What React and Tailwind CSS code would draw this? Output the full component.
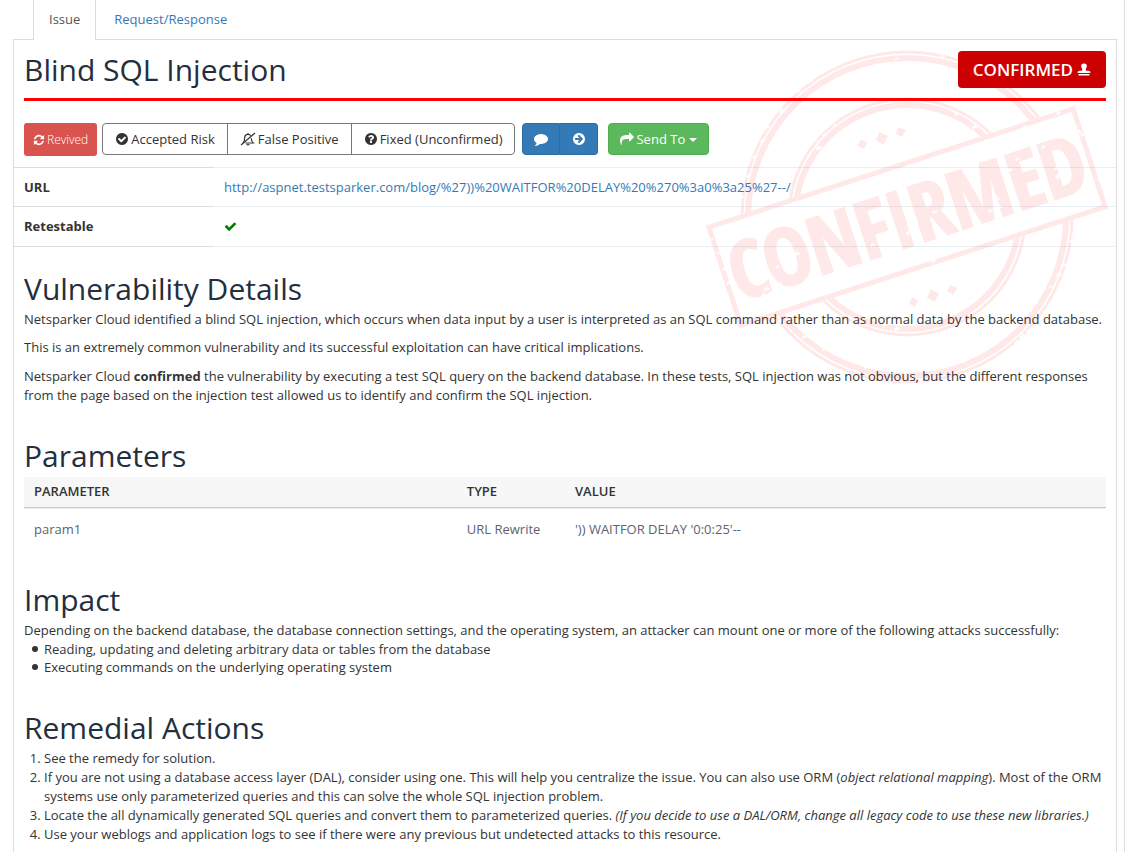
const ICONS = {
  refresh:
    'M1639 1056q0 5-1 7-64 268-268 434.5t-478 166.5q-146 0-282.5-55t-243.5-157l-129 129q-19 19-45 19t-45-19-19-45v-448q0-26 19-45t45-19h448q26 0 45 19t19 45-19 45l-137 137q71 66 161 102t187 36q134 0 250-65t186-179q11-17 53-117 8-23 30-23h192q13 0 22.5 9.5t9.5 22.5zm25-800v448q0 26-19 45t-45 19h-448q-26 0-45-19t-19-45 19-45l138-138q-148-137-349-137-134 0-250 65t-186 179q-11 17-53 117-8 23-30 23h-199q-13 0-22.5-9.5t-9.5-22.5v-7q65-268 270-434.5t480-166.5q146 0 284 55.5t245 156.5l130-129q19-19 45-19t45 19 19 45z',
  checkCircle:
    'M1412 734q0-28-18-46l-91-90q-19-19-45-19t-45 19l-408 407-226-226q-19-19-45-19t-45 19l-91 90q-18 18-18 46 0 27 18 45l362 362q19 19 45 19 27 0 46-19l543-543q18-18 18-45zm252 162q0 209-103 385.5t-279.5 279.5-385.5 103-385.5-103-279.5-279.5-103-385.5 103-385.5 279.5-279.5 385.5-103 385.5 103 279.5 279.5 103 385.5z',
  questionCircle:
    'M1024 1376v-192q0-14-9-23t-23-9h-192q-14 0-23 9t-9 23v192q0 14 9 23t23 9h192q14 0 23-9t9-23zm256-672q0-88-55.5-163t-138.5-116-170-41q-243 0-371 213-15 24 8 42l132 100q7 6 19 6 16 0 25-12 53-68 86-92 34-24 86-24 48 0 85.5 26t37.5 59q0 38-20 61t-68 45q-63 28-115.5 86.5t-52.5 125.5v36q0 14 9 23t23 9h192q14 0 23-9t9-23q0-19 21.5-49.5t54.5-49.5q32-18 49-28.5t46-35 44.5-48 28-60.5 12.5-81zm384 192q0 209-103 385.5t-279.5 279.5-385.5 103-385.5-103-279.5-279.5-103-385.5 103-385.5 279.5-279.5 385.5-103 385.5 103 279.5 279.5 103 385.5z',
  comment:
    'M1792 896q0 174-120 321.5t-326 233-450 85.5q-70 0-145-8-198 175-460 242-49 14-114 22-17 2-30.5-9t-17.5-29v-1q-3-4-.5-12t2-10 4.5-9.5l6-9 7-8.5 8-9q7-8 31-34.5t34.5-38 31-39.5 32.5-51 27-59 26-76q-157-89-247.5-220t-90.5-281q0-130 71-248.5t191-204.5 286-136.5 348-50.5q244 0 450 85.5t326 233 120 321.5z',
  arrowCircle:
    'M1413 896q0-27-18-45l-91-91-362-362q-18-18-45-18t-45 18l-91 91q-18 18-18 45t18 45l189 189h-502q-26 0-45 19t-19 45v128q0 26 19 45t45 19h502l-189 189q-18 18-18 45t18 45l91 91q18 18 45 18t45-18l362-362 91-91q18-18 18-45zm251 0q0 209-103 385.5t-279.5 279.5-385.5 103-385.5-103-279.5-279.5-103-385.5 103-385.5 279.5-279.5 385.5-103 385.5 103 279.5 279.5 103 385.5z',
  share:
    'M1792 640q0 26-19 45l-512 512q-19 19-45 19t-45-19-19-45v-256h-224q-98 0-175.5 6t-154 21.5-133 42.5-105.5 69.5-80 101-48.5 138.5-17.5 181q0 55 5 123 0 6 2.5 23.5t2.5 26.5q0 15-8.5 25t-23.5 10q-16 0-28-17-7-9-13-22t-13.5-30-10.5-24q-127-285-127-451 0-199 53-333 162-403 875-403h224v-256q0-26 19-45t45-19 45 19l512 512q19 19 19 45z',
  check:
    'M1671 566q0 40-28 68l-724 724-136 136q-28 28-68 28t-68-28l-136-136-362-362q-28-28-28-68t28-68l136-136q28-28 68-28t68 28l294 295 656-657q28-28 68-28t68 28l136 136q28 28 28 68z',
};

function Icon({ name, className = 'size-[14px]' }) {
  return (
    <svg viewBox="0 0 1792 1792" fill="currentColor" aria-hidden="true" className={'shrink-0 ' + className}>
      <path d={ICONS[name]} />
    </svg>
  );
}

function BellSlashIcon() {
  return (
    <svg viewBox="0 0 16 14" fill="none" stroke="currentColor" strokeWidth="1.2" aria-hidden="true" className="h-[14px] w-4 shrink-0">
      <path d="M3 11C4.200 9.800 4.700 8.200 4.700 5.800C4.700 3.800 6 2.300 8 2.300C9.300 2.300 10.300 2.900 10.800 3.800M11.300 6.200C11.400 8.500 12 10 13.200 11H5.500M8 2.300V1" />
      <path d="M6.700 12.200Q8 13.600 9.300 12.200M1 13L15 1" />
    </svg>
  );
}

function StampIcon() {
  return (
    <svg viewBox="0 0 14 14" fill="currentColor" aria-hidden="true" className="size-[14px] shrink-0">
      <path d="M7 .5a2.900 2.900 0 0 1 2.800 3.300C9.500 5 8.700 5.600 8.700 6.800c0 .8.400 1 1.200 1H11.500Q13.500 7.800 13.500 10H.5Q.5 7.800 2.500 7.800H4.100c.8 0 1.200-.2 1.200-1C5.300 5.600 4.500 5 4.200 3.800A2.900 2.900 0 0 1 7 .5zM1.500 11h11v1.500h-11z" />
    </svg>
  );
}

/* Worn spots that are knocked out of the rubber-stamp ink: [x, y, size]. */
const WEAR = [
  [172, 50, 5], [180, 46, 4], [184, 52, 3], [155, 54, 3], [152, 3, 3], [190, 10, 2], [236, 8, 3], [262, 16, 3],
  [103, 32, 4], [107, 28, 3], [92, 42, 3], [75, 62, 4], [60, 78, 4], [56, 92, 3], [48, 108, 3], [42, 127, 3],
  [37, 148, 2], [118, 86, 3], [108, 92, 3], [112, 99, 4], [128, 76, 2], [250, 65, 3], [268, 78, 4],
  [330, 50, 5], [336, 56, 4], [342, 60, 5], [346, 52, 4], [352, 64, 3], [295, 88, 4], [318, 78, 3], [280, 92, 3],
  [204, 176, 6], [207, 170, 4], [202, 184, 4], [228, 163, 3], [221, 156, 3], [150, 150, 3], [166, 196, 3], [120, 172, 2],
  [289, 150, 5], [292, 158, 4], [284, 162, 3], [303, 121, 4], [311, 110, 3], [352, 127, 5], [350, 119, 3], [366, 79, 5],
  [372, 83, 4], [376, 86, 3], [337, 98, 3], [377, 137, 2], [90, 205, 4], [71, 218, 3], [60, 240, 4], [57, 246, 3],
  [74, 234, 2], [62, 164, 3], [50, 190, 2], [110, 228, 3], [230, 205, 5], [237, 202, 4], [244, 200, 5], [227, 212, 3],
  [190, 218, 3], [170, 226, 3], [340, 165, 4], [336, 170, 3], [310, 176, 2], [393, 130, 3], [384, 100, 2], [18, 220, 3],
  [22, 234, 3], [6, 190, 2], [12, 204, 2], [82, 270, 4], [92, 266, 4], [74, 272, 3], [66, 276, 4], [258, 218, 3],
  [242, 226, 4], [247, 232, 3], [210, 276, 3], [190, 280, 4], [178, 276, 3], [230, 280, 3], [155, 272, 3], [287, 262, 4],
  [281, 270, 3], [368, 184, 4], [365, 192, 3], [357, 216, 4], [352, 226, 4], [344, 238, 2], [316, 288, 5], [310, 294, 4],
  [322, 282, 3], [262, 326, 3], [215, 332, 3], [160, 318, 3], [118, 300, 3], [98, 288, 3], [138, 309, 3], [240, 318, 2],
];

function ConfirmedStamp() {
  return (
    <svg
      viewBox="0 0 402 336"
      aria-hidden="true"
      className="pointer-events-none absolute top-[9px] right-[8px] h-[336px] w-[402px] text-[#ff0000] opacity-[0.085]"
    >
      <defs>
        <mask id="wear" maskUnits="userSpaceOnUse" x="0" y="0" width="402" height="336">
          <rect width="402" height="336" fill="#fff" />
          {WEAR.map(([x, y, s], i) => (
            <path
              key={i}
              fill="#000"
              d={`M${x - s * 0.6} ${y}l${s * 0.5} ${-s * 0.3} ${s * 0.3} ${-s * 0.6} ${s * 0.3} ${s * 0.7} ${s * 0.6} ${-s * 0.2} ${-s * 0.4} ${s * 0.7} ${-s * 0.5} ${-s * 0.1} ${-s * 0.3} ${s * 0.6}z`}
            />
          ))}
        </mask>
        <mask id="band" maskUnits="userSpaceOnUse" x="0" y="0" width="402" height="336">
          <rect width="402" height="336" fill="#fff" />
          <rect x="7" y="114" width="388" height="108" fill="#000" transform="rotate(-18 201 168)" />
        </mask>
      </defs>
      <g mask="url(#wear)">
        <g mask="url(#band)" fill="none" stroke="currentColor">
          <circle cx="201" cy="168" r="165" strokeWidth="3" />
          <circle cx="201" cy="168" r="159" strokeWidth="6" />
          <circle cx="201" cy="168" r="118" strokeWidth="3" />
          <circle cx="201" cy="168" r="112" strokeWidth="6" />
        </g>
        <g transform="rotate(-18 201 168)" fill="currentColor">
          <rect x="9.500" y="116.500" width="383" height="103" fill="none" stroke="currentColor" strokeWidth="5" />
          <path d="M201 79l7 6-7 7-6-7zM181 80l5 5-5 5-5-5zM221 80l6 5-6 5-5-5z" />
          <path d="M201 244l7 7-7 6-6-6zM181 246l5 5-5 5-5-5zM221 246l6 5-6 5-5-5z" />
          <text
            x="201"
            y="197"
            textAnchor="middle"
            fontSize="80"
            stroke="currentColor"
            strokeWidth="2"
            className="font-['Open_Sans_Condensed','Roboto_Condensed','Liberation_Sans_Narrow',sans-serif] font-bold"
          >
            CONFIRMED
          </text>
        </g>
      </g>
    </svg>
  );
}

const Heading = ({ children }) => <h2 className="text-[30px] leading-[34px] text-[#242f3e]">{children}</h2>;

const outline = 'flex h-8 cursor-pointer items-center gap-[2px] border border-[#777] bg-white px-3';
const blue = 'flex h-8 w-[38px] cursor-pointer items-center justify-center border border-[#2e6da4] bg-[#337ab7] text-white';
const bullet =
  "flex gap-[6px] before:mt-[6px] before:size-[6px] before:shrink-0 before:rounded-full before:bg-[#333] before:content-['']";

export default function App() {
  return (
    <div className="mr-3 min-h-screen border-r border-[#ddd] bg-white pr-[7px] pl-[13px] font-['Open_Sans','Noto_Sans',sans-serif] text-[13px] leading-[18px] text-[#333]">
      <nav className="flex h-10 border-b border-[#ddd] pl-5">
        <a href="#issue" aria-current="page" className="-mb-px flex h-10 items-center border-x border-[#ddd] bg-white px-[15px] pb-[2px] text-[#555]">
          Issue
        </a>
        <a href="#request" className="flex h-10 items-center px-[18px] pb-[2px] text-[#337ab7]">
          Request/Response
        </a>
      </nav>

      <main className="relative min-h-[812px] border-x border-[#ddd]">
        <header className="mx-[10px] flex h-[61px] items-start justify-between border-b-[3px] border-[#ff0000] pt-[11px]">
          <h1 className="text-[30px] leading-[38px] text-[#242f3e]">Blind SQL Injection</h1>
          <button type="button" className="flex h-[37px] cursor-pointer items-center gap-1 rounded-[4px] bg-[#cc0000] px-[15px] text-[17px] font-semibold text-white">
            CONFIRMED <StampIcon />
          </button>
        </header>

        <div className="mt-[22px] flex px-[10px]">
          <button type="button" className="flex h-[33px] cursor-pointer items-center gap-[2px] rounded-[3px] bg-[#d9534f] px-[9px] text-[12px] text-white">
            <Icon name="refresh" className="size-[12px]" />
            <span className="font-light">Revived</span>
          </button>
          <div className="ml-[5px] flex">
            <button type="button" className={outline + ' rounded-l-[4px]'}>
              <Icon name="checkCircle" />
              Accepted Risk
            </button>
            <button type="button" className={outline + ' -ml-px'}>
              <BellSlashIcon />
              False Positive
            </button>
            <button type="button" className={outline + ' -ml-px rounded-r-[4px]'}>
              <Icon name="questionCircle" />
              Fixed (Unconfirmed)
            </button>
          </div>
          <div className="ml-[7px] flex">
            <button type="button" aria-label="Comment" className={blue + ' rounded-l-[4px]'}>
              <Icon name="comment" />
            </button>
            <button type="button" aria-label="Go" className={blue + ' rounded-r-[4px] border-l-0'}>
              <Icon name="arrowCircle" />
            </button>
          </div>
          <button type="button" className="ml-[10px] flex h-8 cursor-pointer items-center gap-[2px] rounded-[4px] border border-[#4cae4c] bg-[#5cb85c] px-[11px] text-white">
            <Icon name="share" />
            Send To
            <svg viewBox="0 0 8 4" fill="currentColor" aria-hidden="true" className="mt-[2px] ml-[2px] h-1 w-2">
              <path d="M0 0h8L4 4z" />
            </svg>
          </button>
        </div>

        <table className="mt-[11px] w-full border-collapse text-left">
          <tbody>
            <tr className="h-[39px]">
              <th scope="row" className="w-[200px] border-t border-[#ddd] px-[10px] font-bold">URL</th>
              <td className="border-t border-[#e7eff5] px-[10px]">
                <a href="#url" className="text-[#337ab7]">
                  http://aspnet.testsparker.com/blog/%27))%20WAITFOR%20DELAY%20%270%3a0%3a25%27--/
                </a>
              </td>
            </tr>
            <tr className="h-10">
              <th scope="row" className="border-y border-[#ddd] px-[10px] pb-[2px] font-bold">Retestable</th>
              <td className="border-y border-[#e7eff5] px-[10px]">
                <Icon name="check" className="size-[13px] text-[#008000]" />
              </td>
            </tr>
          </tbody>
        </table>

        <div className="px-[10px]">
          <section className="mt-[25px]">
            <Heading>Vulnerability Details</Heading>
            <p className="mt-1">
              Netsparker Cloud identified a blind SQL injection, which occurs when data input by a user is interpreted as an SQL command
              rather than as normal data by the backend database.
            </p>
            <p className="mt-[10px]">This is an extremely common vulnerability and its successful exploitation can have critical implications.</p>
            <p className="mt-[11px] leading-[19px]">
              Netsparker Cloud <strong className="font-bold">confirmed</strong> the vulnerability by executing a test SQL query on the
              backend database. In these tests, SQL injection was not obvious, but the different responses from the page based on the
              injection test allowed us to identify and confirm the SQL injection.
            </p>
          </section>

          <section className="mt-[34px]">
            <Heading>Parameters</Heading>
            <table className="mt-1 w-full table-fixed border-separate border-spacing-0 text-left">
              <thead>
                <tr className="h-[31px] bg-[#f7f7f7]">
                  <th className="w-[40%] border-b border-[#c3cacf] px-[10px] pb-[2px] font-semibold">PARAMETER</th>
                  <th className="w-[10%] border-b border-[#c3cacf] px-[10px] pb-[2px] font-semibold">TYPE</th>
                  <th className="border-b border-[#c3cacf] px-[10px] pb-[2px] font-semibold">VALUE</th>
                </tr>
              </thead>
              <tbody>
                <tr className="h-[42px] text-[#5b6470]">
                  <td className="border-t border-[#e7eff5] px-[10px] pb-[2px]">param1</td>
                  <td className="border-t border-[#e7eff5] px-[10px] pb-[2px]">URL Rewrite</td>
                  <td className="border-t border-[#e7eff5] px-[10px] pb-[2px]">')) WAITFOR DELAY '0:0:25'--</td>
                </tr>
              </tbody>
            </table>
          </section>

          <section className="mt-[33px]">
            <Heading>Impact</Heading>
            <p className="mt-1">
              Depending on the backend database, the database connection settings, and the operating system, an attacker can mount one or
              more of the following attacks successfully:
            </p>
            <ul className="mt-px pl-2">
              <li className={bullet}>Reading, updating and deleting arbitrary data or tables from the database</li>
              <li className={bullet}>Executing commands on the underlying operating system</li>
            </ul>
          </section>

          <section className="mt-[35px]">
            <Heading>Remedial Actions</Heading>
            <ol className="mt-1 list-decimal pl-5 leading-[19px]">
              <li>See the remedy for solution.</li>
              <li>
                If you are not using a database access layer (DAL), consider using one. This will help you centralize the issue. You can
                also use ORM (<em>object relational mapping</em>). Most of the ORM systems use only parameterized queries and this can
                solve the whole SQL injection problem.
              </li>
              <li>
                Locate the all dynamically generated SQL queries and convert them to parameterized queries.{' '}
                <em>(If you decide to use a DAL/ORM, change all legacy code to use these new libraries.)</em>
              </li>
              <li>Use your weblogs and application logs to see if there were any previous but undetected attacks to this resource.</li>
            </ol>
          </section>
        </div>

        <ConfirmedStamp />
      </main>
    </div>
  );
}
